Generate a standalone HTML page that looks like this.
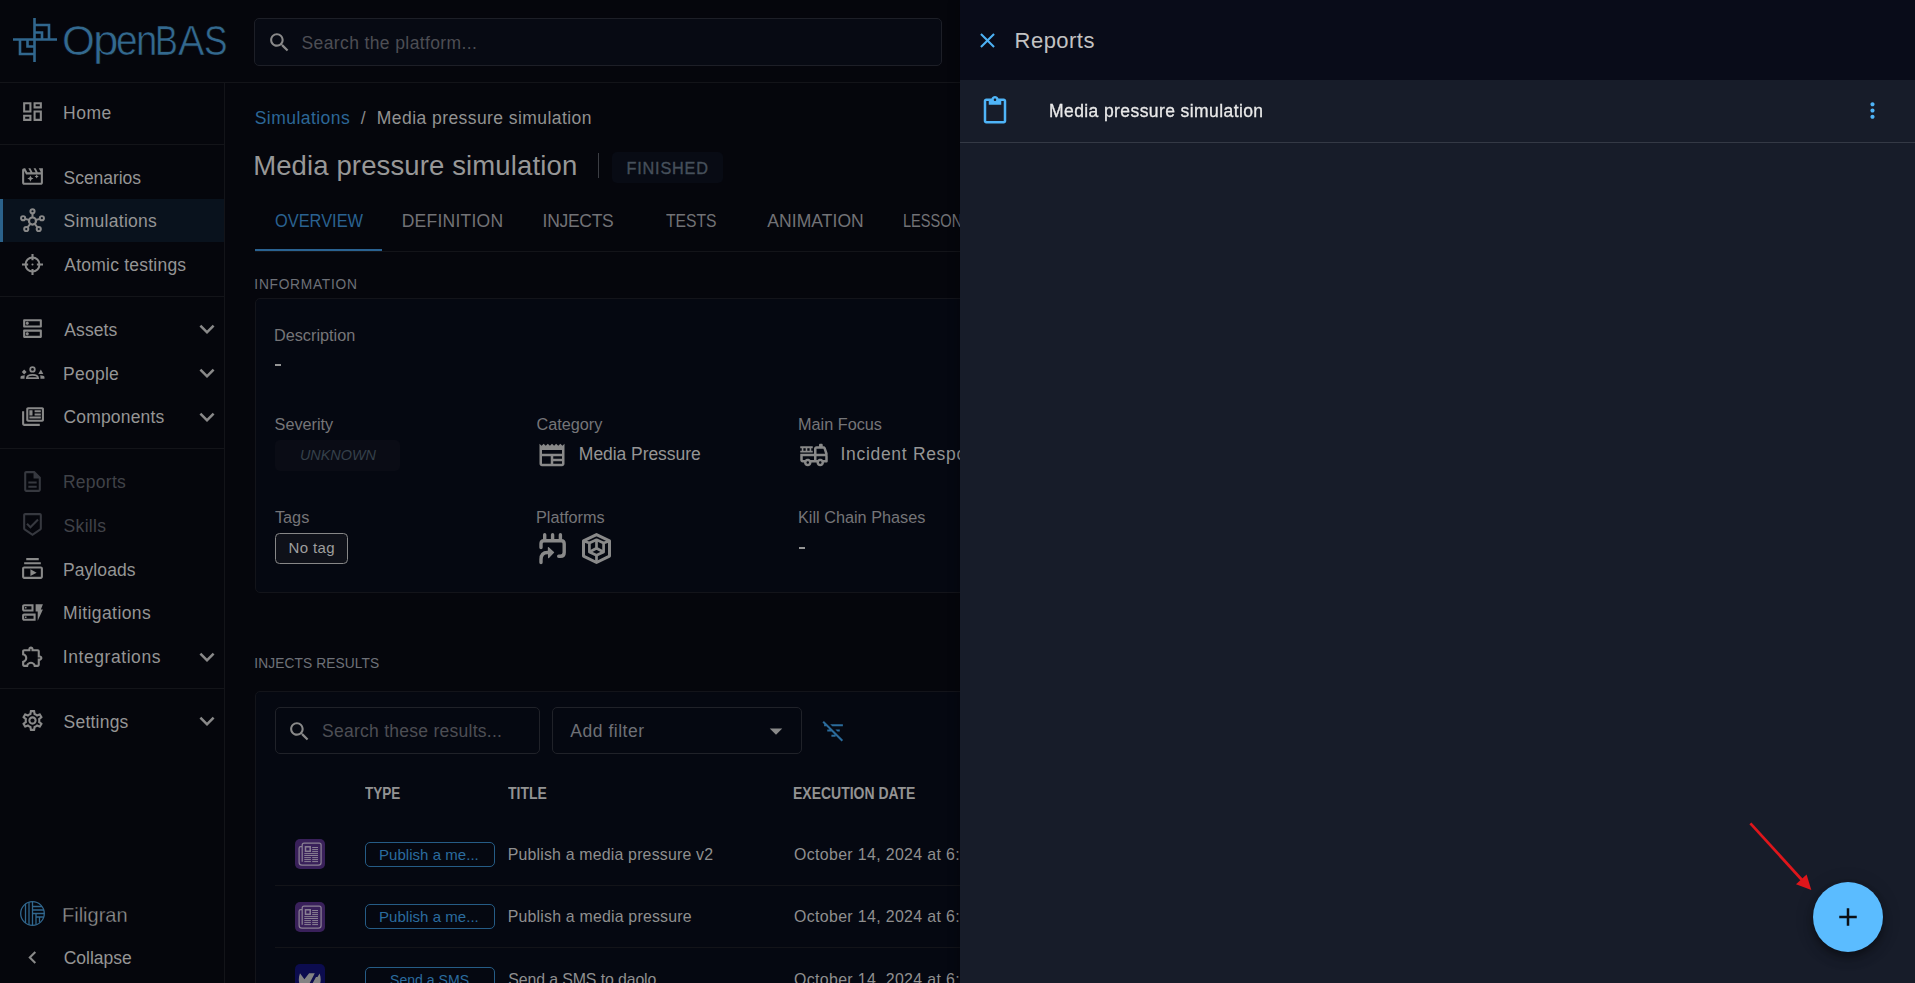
<!DOCTYPE html>
<html lang="en">
<head>
<meta charset="utf-8">
<title>OpenBAS - Reports</title>
<style>
*{box-sizing:border-box;margin:0;padding:0}
html,body{width:1915px;height:983px;overflow:hidden;background:#05060c}
body{font-family:"Liberation Sans",sans-serif;position:relative}
svg{display:block}
.b{position:absolute}
.t{position:absolute;white-space:nowrap}
#side{position:absolute;left:0;top:0;width:225px;height:983px}
#main{position:absolute;left:0;top:0;width:960px;height:983px;overflow:hidden}
#drawer{position:absolute;left:0;top:0;width:1915px;height:983px}
#dsh{position:absolute;left:960px;top:0;width:955px;height:983px;box-shadow:0 0 10px 1px rgba(0,0,0,.35)}
</style>
</head>
<body>
<div id="side">
<svg class="b" style="left:13px;top:18px" width="44" height="44" viewBox="0 0 44 44" fill="none" stroke="#31678e" stroke-width="2.6"><path d="M21.5 0V44"/><path d="M0 21.5H44"/><path d="M21.5 7H36V21.5"/><path d="M21.5 14.500H29V21.500"/><path d="M7 21.500V36H21.500"/><path d="M14.500 21.500V28.500H21.500"/></svg>
<div class="t" style="left:62.20px;top:17px;line-height:47px;font-size:41.6px;color:#33698f;transform:scaleX(1.0142);transform-origin:0 50%;-webkit-text-stroke:0.6px #05060c;">O</div>
<div class="t" style="left:92.65px;top:17px;line-height:47px;font-size:41.6px;color:#33698f;transform:scaleX(1.1011);transform-origin:0 50%;-webkit-text-stroke:0.6px #05060c;">p</div>
<div class="t" style="left:116.45px;top:17px;line-height:47px;font-size:41.6px;color:#33698f;transform:scaleX(0.9324);transform-origin:0 50%;-webkit-text-stroke:0.6px #05060c;">e</div>
<div class="t" style="left:136.25px;top:17px;line-height:47px;font-size:41.6px;color:#33698f;transform:scaleX(0.9224);transform-origin:0 50%;-webkit-text-stroke:0.6px #05060c;">n</div>
<div class="t" style="left:155.39px;top:17px;line-height:47px;font-size:41.6px;color:#33698f;transform:scaleX(0.8220);transform-origin:0 50%;-webkit-text-stroke:0.6px #05060c;">B</div>
<div class="t" style="left:177.52px;top:17px;line-height:47px;font-size:41.6px;color:#33698f;transform:scaleX(0.9534);transform-origin:0 50%;-webkit-text-stroke:0.6px #05060c;">A</div>
<div class="t" style="left:203.60px;top:17px;line-height:47px;font-size:41.6px;color:#33698f;transform:scaleX(0.8477);transform-origin:0 50%;-webkit-text-stroke:0.6px #05060c;">S</div>
<svg class="b" style="left:20px;top:99px;fill:#898989;" width="25" height="25" viewBox="0 0 24 24"><path d="M19 5v2h-4V5h4M9 5v6H5V5h4m10 8v6h-4v-6h4M9 17v2H5v-2h4M21 3h-8v6h8V3zM11 3H3v10h8V3zm10 8h-8v10h8V11zm-10 4H3v6h8v-6z"/></svg>
<div class="t" style="left:62.96px;top:103px;line-height:20px;font-size:17.5px;color:#959595;letter-spacing:0.544px;">Home</div>
<svg class="b" style="left:20px;top:164px;fill:#898989;" width="25" height="25" viewBox="0 0 24 24"><path d="M10 11l-.94 2.06L7 14l2.06.94L10 17l.94-2.06L13 14l-2.06-.94zm8.01-7l2 4h-3l-2-4h-2l2 4h-3l-2-4h-2l2 4h-3l-2-4h-1c-1.1 0-1.99.9-1.99 2l-.01 12c0 1.1.9 2 2 2h16c1.1 0 1.99-.9 1.99-2V4h-3.99zm2 14h-16V6.47L5.77 10H16l-.63 1.37L14 12l1.37.63L16 14l.63-1.37L18 12l-1.37-.63L16 10h4.01v8z"/></svg>
<div class="t" style="left:63.61px;top:168px;line-height:20px;font-size:17.5px;color:#959595;letter-spacing:-0.049px;">Scenarios</div>
<div class="b" style="left:0px;top:199px;width:224px;height:43px;background:#09121d"></div>
<div class="b" style="left:0px;top:199px;width:2.7px;height:43px;background:#2b628b"></div>
<svg class="b" style="left:20px;top:208px;fill:#898989;stroke:#898989;" width="25" height="25" viewBox="0 0 24 24"><g fill="none" stroke-width="1.9"><circle cx="12" cy="12.500" r="3.400" stroke-width="2.100"/><circle cx="12" cy="3.100" r="2"/><circle cx="3" cy="9.800" r="2"/><circle cx="21" cy="9.800" r="2"/><circle cx="6" cy="20.200" r="2"/><circle cx="18" cy="20.200" r="2"/><path d="M12 5.100V9.100M4.900 10.400L8.800 11.500M19.100 10.400L15.200 11.500M7.200 18.600L9.900 15.200M16.800 18.600L14.100 15.200"/></g></svg>
<div class="t" style="left:63.61px;top:211px;line-height:20px;font-size:17.5px;color:#959595;letter-spacing:0.277px;">Simulations</div>
<svg class="b" style="left:20px;top:252px;fill:#898989;stroke:#898989;" width="25" height="25" viewBox="0 0 24 24"><g fill="none"><circle cx="12" cy="12" r="6.700" stroke-width="1.900"/><path stroke-width="2" d="M12 1.900V7.800M12 16.200V22.100M1.900 12H7.800M16.200 12H22.100"/></g><circle cx="12" cy="12" r="1" stroke="none"/></svg>
<div class="t" style="left:64.37px;top:255px;line-height:20px;font-size:17.5px;color:#959595;letter-spacing:0.222px;">Atomic testings</div>
<svg class="b" style="left:20px;top:316px;fill:#898989;" width="25" height="25" viewBox="0 0 24 24"><path d="M19 15v4H5v-4h14m1-2H4c-.55 0-1 .45-1 1v6c0 .55.45 1 1 1h16c.55 0 1-.45 1-1v-6c0-.55-.45-1-1-1zM7 18.5c-.82 0-1.5-.67-1.5-1.5s.68-1.5 1.5-1.5 1.5.67 1.5 1.5-.67 1.5-1.5 1.5zM19 5v4H5V5h14m1-2H4c-.55 0-1 .45-1 1v6c0 .55.45 1 1 1h16c.55 0 1-.45 1-1V4c0-.55-.45-1-1-1zM7 8.5c-.82 0-1.5-.67-1.5-1.5S6.18 5.5 7 5.5s1.5.68 1.5 1.5S7.83 8.5 7 8.5z"/></svg>
<div class="t" style="left:64.37px;top:320px;line-height:20px;font-size:17.5px;color:#959595;letter-spacing:0.090px;">Assets</div>
<svg class="b" style="left:192px;top:313.5px;fill:#898989;" width="30" height="30" viewBox="0 0 24 24"><path d="M16.59 8.59L12 13.17 7.41 8.59 6 10l6 6 6-6z"/></svg>
<svg class="b" style="left:20px;top:360px;fill:#898989;stroke:#898989;" width="25" height="25" viewBox="0 0 24 24"><g transform="translate(0,1)"><circle cx="12" cy="8" r="2.200" fill="none" stroke-width="1.700"/><path d="M6.600 16.300C7 12.200 17 12.200 17.400 16.300Z" fill="none" stroke-width="1.700"/><path d="M4 8.200L6.300 10.500 4 12.800 1.700 10.500Z" stroke="none"/><path d="M20 8.200L22.400 12.500H17.600Z" stroke="none"/><path d="M0.500 17.100V15.200C0.500 14.300 2.400 13.600 4.600 13.600C4.400 14.600 4.300 15.800 4.400 17.100Z" stroke="none"/><path d="M23.500 17.100V15.200C23.500 14.300 21.600 13.600 19.400 13.600C19.600 14.600 19.700 15.800 19.600 17.100Z" stroke="none"/></g></svg>
<div class="t" style="left:62.96px;top:364px;line-height:20px;font-size:17.5px;color:#959595;letter-spacing:0.264px;">People</div>
<svg class="b" style="left:192px;top:357.5px;fill:#898989;" width="30" height="30" viewBox="0 0 24 24"><path d="M16.59 8.59L12 13.17 7.41 8.59 6 10l6 6 6-6z"/></svg>
<svg class="b" style="left:20px;top:404px;fill:#898989;" width="25" height="25" viewBox="0 0 24 24"><path d="M4 7v12h15v2H4c-2 0-2-2-2-2V7h2m17-2v10H8V5h13m.3-2H7.7C6.76 3 6 3.7 6 4.55v10.9c0 .86.76 1.55 1.7 1.55h13.6c.94 0 1.7-.69 1.7-1.55V4.55C23 3.7 22.24 3 21.3 3M9 6h3v5H9V6m11 8H9v-2h11v2m0-6h-6V6h6v2m0 3h-6V9h6v2z"/></svg>
<div class="t" style="left:63.51px;top:407px;line-height:20px;font-size:17.5px;color:#959595;letter-spacing:0.166px;">Components</div>
<svg class="b" style="left:192px;top:401.5px;fill:#898989;" width="30" height="30" viewBox="0 0 24 24"><path d="M16.59 8.59L12 13.17 7.41 8.59 6 10l6 6 6-6z"/></svg>
<svg class="b" style="left:20px;top:469px;fill:#36383f;" width="25" height="25" viewBox="0 0 24 24"><path d="M8 16h8v2H8zm0-4h8v2H8zm6-10H6c-1.1 0-2 .9-2 2v16c0 1.1.89 2 1.99 2H18c1.1 0 2-.9 2-2V8l-6-6zm4 18H6V4h7v5h5v11z"/></svg>
<div class="t" style="left:62.96px;top:472px;line-height:20px;font-size:17.5px;color:#404248;letter-spacing:0.265px;">Reports</div>
<svg class="b" style="left:20px;top:512px;fill:#36383f;" width="25" height="25" viewBox="0 0 24 24"><path d="M19 1H5c-1.1 0-1.99.9-1.99 2L3 15.93c0 .69.35 1.3.88 1.66L12 23l8.11-5.41c.53-.36.88-.97.88-1.66L21 3c0-1.1-.9-2-2-2zm-7 19.6l-7-4.66V3h14v12.93l-7 4.67zm-2.01-7.42l-2.58-2.59L6 12l4 4 8-8-1.42-1.42z"/></svg>
<div class="t" style="left:63.61px;top:516px;line-height:20px;font-size:17.5px;color:#404248;letter-spacing:0.318px;">Skills</div>
<svg class="b" style="left:20px;top:556px;fill:#898989;" width="25" height="25" viewBox="0 0 24 24"><path d="M4 6h16v2H4zm2-4h12v2H6zm14 8H4c-1.1 0-2 .9-2 2v8c0 1.1.9 2 2 2h16c1.1 0 2-.9 2-2v-8c0-1.1-.9-2-2-2zm0 10H4v-8h16v8zm-10-7.27v6.53L16 16z"/></svg>
<div class="t" style="left:62.96px;top:560px;line-height:20px;font-size:17.5px;color:#959595;letter-spacing:0.082px;">Payloads</div>
<svg class="b" style="left:20px;top:600px;fill:#898989;" width="25" height="25" viewBox="0 0 24 24"><path d="M17 20v-9h-2V4h7l-2 5h2l-5 11zM15 13v7H4c-1.1 0-2-.9-2-2v-3c0-1.1.9-2 2-2h11zm-2 2H4v3h9v-3zm-6.75.75h-1.5v1.5h1.5zM13 4v7H4c-1.1 0-2-.9-2-2V6c0-1.1.9-2 2-2h9zm-2 2H4v3h7V6zM6.25 6.75h-1.5v1.5h1.5v-1.5z"/></svg>
<div class="t" style="left:62.96px;top:603px;line-height:20px;font-size:17.5px;color:#959595;letter-spacing:0.412px;">Mitigations</div>
<svg class="b" style="left:20px;top:644px;fill:#898989;" width="25" height="25" viewBox="0 0 24 24"><path d="M10.5 4.5c.28 0 .5.22.5.5v2h6v6h2c.28 0 .5.22.5.5s-.22.5-.5.5h-2v6h-2.12c-.68-1.75-2.39-3-4.38-3s-3.7 1.25-4.38 3H4v-2.12c1.75-.68 3-2.39 3-4.38 0-1.99-1.24-3.7-2.99-4.38L4 7h6V5c0-.28.22-.5.5-.5m0-2C9.12 2.5 8 3.62 8 5H4c-1.1 0-1.99.9-1.99 2v3.8h.29c1.49 0 2.7 1.21 2.7 2.7s-1.21 2.7-2.7 2.7H2V20c0 1.1.9 2 2 2h3.8v-.3c0-1.49 1.21-2.7 2.7-2.7s2.7 1.21 2.7 2.7v.3H17c1.1 0 2-.9 2-2v-4c1.38 0 2.5-1.12 2.5-2.5S20.38 11 19 11V7c0-1.1-.9-2-2-2h-4c0-1.38-1.12-2.5-2.5-2.5z"/></svg>
<div class="t" style="left:62.79px;top:647px;line-height:20px;font-size:17.5px;color:#959595;letter-spacing:0.564px;">Integrations</div>
<svg class="b" style="left:192px;top:641.5px;fill:#898989;" width="30" height="30" viewBox="0 0 24 24"><path d="M16.59 8.59L12 13.17 7.41 8.59 6 10l6 6 6-6z"/></svg>
<svg class="b" style="left:20px;top:708px;fill:#898989;" width="25" height="25" viewBox="0 0 24 24"><path d="M19.43 12.98c.04-.32.07-.64.07-.98 0-.34-.03-.66-.07-.98l2.11-1.65c.19-.15.24-.42.12-.64l-2-3.46c-.09-.16-.26-.25-.44-.25-.06 0-.12.01-.17.03l-2.49 1c-.52-.4-1.08-.73-1.69-.98l-.38-2.65C14.46 2.18 14.25 2 14 2h-4c-.25 0-.46.18-.49.42l-.38 2.65c-.61.25-1.17.59-1.69.98l-2.49-1c-.06-.02-.12-.03-.18-.03-.17 0-.34.09-.43.25l-2 3.46c-.13.22-.07.49.12.64l2.11 1.65c-.04.32-.07.65-.07.98 0 .33.03.66.07.98l-2.11 1.65c-.19.15-.24.42-.12.64l2 3.46c.09.16.26.25.44.25.06 0 .12-.01.17-.03l2.49-1c.52.4 1.08.73 1.69.98l.38 2.65c.03.24.24.42.49.42h4c.25 0 .46-.18.49-.42l.38-2.65c.61-.25 1.17-.59 1.69-.98l2.49 1c.06.02.12.03.18.03.17 0 .34-.09.43-.25l2-3.46c.12-.22.07-.49-.12-.64l-2.11-1.65zm-1.98-1.71c.04.31.05.52.05.73 0 .21-.02.43-.05.73l-.14 1.13.89.7 1.08.84-.7 1.21-1.27-.51-1.04-.42-.9.68c-.43.32-.84.56-1.25.73l-1.06.43-.16 1.13-.2 1.35h-1.4l-.19-1.35-.16-1.13-1.06-.43c-.43-.18-.83-.41-1.23-.71l-.91-.7-1.06.43-1.27.51-.7-1.21 1.08-.84.89-.7-.14-1.13c-.03-.31-.05-.54-.05-.74s.02-.43.05-.73l.14-1.13-.89-.7-1.08-.84.7-1.21 1.27.51 1.04.42.9-.68c.43-.32.84-.56 1.25-.73l1.06-.43.16-1.13.2-1.35h1.39l.19 1.35.16 1.13 1.06.43c.43.18.83.41 1.23.71l.91.7 1.06-.43 1.27-.51.7 1.21-1.07.85-.89.7.14 1.13zM12 8c-2.21 0-4 1.79-4 4s1.79 4 4 4 4-1.79 4-4-1.79-4-4-4zm0 6c-1.1 0-2-.9-2-2s.9-2 2-2 2 .9 2 2-.9 2-2 2z"/></svg>
<div class="t" style="left:63.61px;top:712px;line-height:20px;font-size:17.5px;color:#959595;letter-spacing:0.213px;">Settings</div>
<svg class="b" style="left:192px;top:705.5px;fill:#898989;" width="30" height="30" viewBox="0 0 24 24"><path d="M16.59 8.59L12 13.17 7.41 8.59 6 10l6 6 6-6z"/></svg>
<div class="b" style="left:0px;top:144px;width:224px;height:1px;background:#131419"></div>
<div class="b" style="left:0px;top:296px;width:224px;height:1px;background:#131419"></div>
<div class="b" style="left:0px;top:448px;width:224px;height:1px;background:#131419"></div>
<div class="b" style="left:0px;top:688px;width:224px;height:1px;background:#131419"></div>
<div class="b" style="left:224px;top:82px;width:1px;height:901px;background:#131419"></div>
<svg class="b" style="left:20px;top:901px" width="25" height="25" viewBox="0 0 25 25" fill="none" stroke="#31678e" stroke-width="1.300"><circle cx="12.500" cy="12.500" r="11.800"/><path d="M5.500 3V22M9 1.300V23.700M12.500 0.700V24.300M12.500 5.500H22M12.500 9H24M12.500 12.500H24.300M16 12.500V23.500M16 16H23.700M19.500 16V21.500"/></svg>
<div class="t" id="fil" style="left:61.96px;top:903px;line-height:23px;font-size:21px;color:#8f8f8f;transform:scaleX(0.9533);transform-origin:0 50%;-webkit-text-stroke:0.3px #05060c;">Filigran</div>
<svg class="b" style="left:20px;top:945px;fill:#898989;" width="25" height="25" viewBox="0 0 24 24"><path d="M15.41 7.41L14 6l-6 6 6 6 1.41-1.41L10.83 12z"/></svg>
<div class="t" style="left:63.71px;top:948px;line-height:20px;font-size:17.5px;color:#959595;letter-spacing:-0.018px;">Collapse</div>
</div>
<div class="b" style="left:0px;top:82px;width:960px;height:1px;background:#131419"></div>
<div id="main">
<div class="b" style="left:254px;top:18px;width:688px;height:48px;border:1px solid #1d1f27;border-radius:5px;background:#070a13"></div>
<svg class="b" style="left:267px;top:30px;fill:#898989;" width="25" height="25" viewBox="0 0 24 24"><path d="M15.5 14h-.79l-.28-.27C15.41 12.59 16 11.11 16 9.5 16 5.91 13.09 3 9.5 3S3 5.91 3 9.5 5.91 16 9.5 16c1.61 0 3.09-.59 4.23-1.57l.27.28v.79l5 4.99L20.49 19l-4.99-5zm-6 0C7.01 14 5 11.99 5 9.5S7.01 5 9.5 5 14 7.01 14 9.5 11.99 14 9.5 14z"/></svg>
<div class="t" style="left:301.51px;top:33px;line-height:20px;font-size:17.5px;color:#4d4e54;letter-spacing:0.385px;">Search the platform...</div>
<div class="t" style="left:254.71px;top:108px;line-height:20px;font-size:17.5px;color:#2c6797;letter-spacing:0.457px;">Simulations</div>
<div class="t" style="left:360.80px;top:108px;line-height:20px;font-size:17.5px;color:#8a8a8a;">/</div>
<div class="t" style="left:376.86px;top:108px;line-height:20px;font-size:17.5px;color:#929292;letter-spacing:0.430px;">Media pressure simulation</div>
<div class="t" id="h1" style="left:253.14px;top:150px;line-height:31px;font-size:27.5px;color:#979797;letter-spacing:0.128px;">Media pressure simulation</div>
<div class="b" style="left:598px;top:153px;width:1px;height:25px;background:#3c3e44"></div>
<div class="b" style="left:612px;top:152px;width:111px;height:31px;border-radius:5px;background:#080b14"></div>
<div class="t" style="left:626.47px;top:159px;line-height:18px;font-size:16.25px;color:#46505b;letter-spacing:0.810px;-webkit-text-stroke:0.35px #46505b;">FINISHED</div>
<div class="b" style="left:255px;top:251px;width:705px;height:1px;background:#131419"></div>
<div class="b" style="left:255px;top:248.5px;width:127px;height:2.5px;background:#2a6291"></div>
<div class="t" style="left:274.52px;top:211px;line-height:20px;font-size:17.5px;color:#2a6291;transform:scaleX(0.9365);transform-origin:0 50%;">OVERVIEW</div>
<div class="t" style="left:401.66px;top:211px;line-height:20px;font-size:17.5px;color:#727276;letter-spacing:0.255px;">DEFINITION</div>
<div class="t" style="left:542.59px;top:211px;line-height:20px;font-size:17.5px;color:#727276;letter-spacing:-0.284px;">INJECTS</div>
<div class="t" style="left:665.95px;top:211px;line-height:20px;font-size:17.5px;color:#727276;transform:scaleX(0.8967);transform-origin:0 50%;">TESTS</div>
<div class="t" style="left:767.27px;top:211px;line-height:20px;font-size:17.5px;color:#727276;letter-spacing:0.067px;">ANIMATION</div>
<div class="t" style="left:902.80px;top:211px;line-height:20px;font-size:17.5px;color:#727276;transform:scaleX(0.8337);transform-origin:0 50%;">LESSONS LEARNED</div>
<div class="t" style="left:254.33px;top:277px;line-height:15px;font-size:13.75px;color:#6e7178;letter-spacing:0.737px;">INFORMATION</div>
<div class="b" style="left:255px;top:298px;width:760px;height:295px;border:1px solid #13141a;border-radius:5px;background:#050811"></div>
<div class="t" style="left:273.97px;top:326px;line-height:18px;font-size:16.25px;color:#757578;">Description</div>
<div class="b" style="left:275px;top:364px;width:6px;height:2px;background:#959595"></div>
<div class="t" style="left:274.56px;top:415px;line-height:18px;font-size:16.25px;color:#757578;">Severity</div>
<div class="b" style="left:275px;top:440px;width:124.7px;height:30.5px;border-radius:5px;background:#0a0c15"></div>
<div class="t" style="left:299.92px;top:447px;line-height:16px;font-size:14.4px;color:#35404a;letter-spacing:0.012px;font-style:italic;">UNKNOWN</div>
<div class="t" style="left:536.47px;top:415px;line-height:18px;font-size:16.25px;color:#757578;">Category</div>
<svg class="b" style="left:537px;top:440px;fill:#898989;" width="30" height="30" viewBox="0 0 24 24"><path d="M22 3l-1.67 1.67L18.67 3 17 4.67 15.33 3l-1.66 1.67L12 3l-1.67 1.67L8.67 3 7 4.67 5.33 3 3.67 4.67 2 3v16c0 1.1.9 2 2 2h16c1.1 0 2-.9 2-2V3zM11 19H4v-6h7v6zm9 0h-7v-2h7v2zm0-4h-7v-2h7v2zm0-4H4V8h16v3z"/></svg>
<div class="t" style="left:578.86px;top:444px;line-height:20px;font-size:17.5px;color:#959595;letter-spacing:-0.057px;">Media Pressure</div>
<div class="t" style="left:797.97px;top:415px;line-height:18px;font-size:16.25px;color:#757578;">Main Focus</div>
<svg class="b" style="left:798.5px;top:440px;fill:#898989;" width="30" height="30" viewBox="0 0 24 24"><path d="M22.9 10.69l-1.44-4.32C21.18 5.55 20.42 5 19.56 5H19V4c0-.55-.45-1-1-1h-1c-.55 0-1 .45-1 1v1h-2c-1.1 0-2 .9-2 2v4H1v5c0 1.1.9 2 2 2h1c0 1.66 1.34 3 3 3s3-1.34 3-3h4c0 1.66 1.34 3 3 3s3-1.34 3-3h2c.55 0 1-.45 1-1v-3.68c0-.21-.03-.42-.1-.63zM14 7h5.560l1.330 4H14V7zM7 19c-.55 0-1-.45-1-1s.45-1 1-1 1 .45 1 1-.45 1-1 1zm5-3H9.220c-.55-.61-1.330-1-2.220-1s-1.670.39-2.220 1H3v-3h9v3zm5 3c-.55 0-1-.45-1-1s.45-1 1-1 1 .45 1 1-.45 1-1 1zm2.220-3c-.55-.61-1.340-1-2.220-1s-1.670.39-2.220 1H14v-3h7v3h-1.780z M1 5h10v1.500H1z M1 8.500h10V10H1z M2.200 6.500h1.300v2h-1.300z M5.350 6.500h1.300v2h-1.300z M8.500 6.500h1.300v2h-1.300z"/></svg>
<div class="t" style="left:840.59px;top:444px;line-height:20px;font-size:17.5px;color:#959595;letter-spacing:0.683px;">Incident Response</div>
<div class="t" style="left:274.94px;top:508px;line-height:18px;font-size:16.25px;color:#757578;">Tags</div>
<div class="b" style="left:275px;top:533px;width:73px;height:31px;border:1px solid #878787;border-radius:4.500px;background:#0f1119"></div>
<div class="t" style="left:288.57px;top:539px;line-height:17px;font-size:15px;color:#9e9e9e;letter-spacing:0.361px;">No tag</div>
<div class="t" style="left:535.97px;top:508px;line-height:18px;font-size:16.25px;color:#757578;">Platforms</div>
<svg class="b" style="left:535px;top:530px" width="35" height="37" viewBox="0 0 35 37" fill="none" stroke="#898989" stroke-width="3.400" stroke-linecap="round" stroke-linejoin="round"><path d="M9.700 4.800V9.500M17.600 4.800V9.500M25.400 4.800V9.500"/><path d="M6 17.500V13.700Q6 10.700 9 10.700H26.200Q29.200 10.700 29.200 13.700V22.500Q29.200 26.300 25.400 26.300H23.700"/><path d="M6 32.500V29.500Q6 22.500 12.500 22.500H14"/><path d="M13.400 17.600L18.600 22.400L13.600 27.600Z" fill="#898989" stroke-width="1.200"/></svg>
<svg class="b" style="left:576px;top:528px" width="40" height="40" viewBox="0 0 40 40" fill="none" stroke="#898989" stroke-linejoin="round"><path stroke-width="3" d="M20.500 6.600L33.500 12.900V28.100L20.500 34.500L7.500 28.100V12.900Z"/><path stroke-width="2.700" d="M20.500 11.800L27.600 15V24L20.500 27.300L13.400 24V15Z"/><path stroke-width="2.700" d="M20.500 11.800V20.300M20.500 20.300L13.400 24M20.500 20.300L27.600 24M20.500 27.300V34M7.500 12.900L13.400 15M33.500 12.900L27.600 15"/></svg>
<div class="t" style="left:797.97px;top:508px;line-height:18px;font-size:16.25px;color:#757578;">Kill Chain Phases</div>
<div class="b" style="left:799px;top:547px;width:6px;height:2px;background:#959595"></div>
<div class="t" style="left:254.33px;top:656px;line-height:15px;font-size:13.75px;color:#6e7178;letter-spacing:0.099px;">INJECTS RESULTS</div>
<div class="b" style="left:255px;top:691px;width:760px;height:320px;border:1px solid #13141a;border-radius:5px;background:#050811"></div>
<div class="b" style="left:275px;top:707px;width:265px;height:47px;border:1px solid #202229;border-radius:5px"></div>
<svg class="b" style="left:287px;top:718.5px;fill:#898989;" width="25" height="25" viewBox="0 0 24 24"><path d="M15.5 14h-.79l-.28-.27C15.41 12.59 16 11.11 16 9.5 16 5.91 13.09 3 9.5 3S3 5.91 3 9.5 5.91 16 9.5 16c1.61 0 3.09-.59 4.23-1.57l.27.28v.79l5 4.99L20.49 19l-4.99-5zm-6 0C7.01 14 5 11.99 5 9.5S7.01 5 9.5 5 14 7.01 14 9.5 11.99 14 9.5 14z"/></svg>
<div class="t" style="left:322.01px;top:721px;line-height:20px;font-size:17.5px;color:#4d4e54;letter-spacing:0.263px;">Search these results...</div>
<div class="b" style="left:552px;top:707px;width:250px;height:47px;border:1px solid #202229;border-radius:5px"></div>
<div class="t" style="left:570.27px;top:721px;line-height:20px;font-size:17.5px;color:#6e7076;letter-spacing:0.529px;">Add filter</div>
<svg class="b" style="left:761px;top:716px;fill:#898989;" width="30" height="30" viewBox="0 0 24 24"><path d="M7 10l5 5 5-5z"/></svg>
<svg class="b" style="left:821px;top:718px;fill:#2b6b9b;" width="25" height="25" viewBox="0 0 24 24"><path d="M10.83 8H21V6H8.83l2 2zm5 5H18v-2h-4.17l2 2zM14 16.83V18h-4v-2h3.17l-3-3H6v-2h2.17l-3-3H3V6h.17L1.39 4.22 2.8 2.81l18.38 18.38-1.41 1.41L14 16.83z"/></svg>
<div class="t" style="left:365.15px;top:785px;line-height:17px;font-size:15.6px;color:#939393;transform:scaleX(0.8659);transform-origin:0 50%;font-weight:bold;">TYPE</div>
<div class="t" style="left:508.14px;top:785px;line-height:17px;font-size:15.6px;color:#939393;transform:scaleX(0.8979);transform-origin:0 50%;font-weight:bold;">TITLE</div>
<div class="t" style="left:793.36px;top:785px;line-height:17px;font-size:15.6px;color:#939393;transform:scaleX(0.8963);transform-origin:0 50%;font-weight:bold;">EXECUTION DATE</div>
<div class="b" style="left:275px;top:885px;width:700px;height:1px;background:#131419"></div>
<div class="b" style="left:275px;top:947px;width:700px;height:1px;background:#131419"></div>
<div class="b" style="left:295px;top:839px;width:30px;height:30px;border-radius:5px;background:#39205a"></div>
<svg class="b" style="left:295px;top:839px;" width="30" height="30" viewBox="0 0 30 30"><g fill="none" stroke="#8a8094" stroke-width="1.250"><path d="M7.200 7.700H5.700Q4.100 7.700 4.100 9.300V23.300Q4.100 26.200 7 26.200H23.400Q26.100 26.200 26.100 23.500V6Q26.100 4.100 24.200 4.100H9.100Q7.200 4.100 7.200 6V22.800"/><rect x="10.500" y="7.800" width="4.700" height="4.500" stroke-width="1.500"/><path stroke-width="1" d="M17.200 8.500H23M17.200 10.600H23M17.200 12.600H23M9.300 14.600H23M9.300 16.500H23M9.300 18.600H15.900M17.200 18.600H23M9.300 20.600H15.900M17.200 20.600H23M9.300 22.600H15.900M17.200 22.600H23"/></g></svg>
<div class="b" style="left:365px;top:842px;width:130px;height:25px;border:1px solid #255c86;border-radius:5px"></div>
<div class="t" style="left:378.97px;top:846px;line-height:17px;font-size:15px;color:#2b6c9f;letter-spacing:0.042px;">Publish a me...</div>
<div class="t" style="left:507.70px;top:846px;line-height:17px;font-size:15.9px;color:#8f8f8f;letter-spacing:0.184px;">Publish a media pressure v2</div>
<div class="t" style="left:793.95px;top:846px;line-height:17px;font-size:15.9px;color:#8f8f8f;letter-spacing:0.361px;">October 14, 2024 at 6:48 PM</div>
<div class="b" style="left:295px;top:902px;width:30px;height:30px;border-radius:5px;background:#39205a"></div>
<svg class="b" style="left:295px;top:902px;" width="30" height="30" viewBox="0 0 30 30"><g fill="none" stroke="#8a8094" stroke-width="1.250"><path d="M7.200 7.700H5.700Q4.100 7.700 4.100 9.300V23.300Q4.100 26.200 7 26.200H23.400Q26.100 26.200 26.100 23.500V6Q26.100 4.100 24.200 4.100H9.100Q7.200 4.100 7.200 6V22.800"/><rect x="10.500" y="7.800" width="4.700" height="4.500" stroke-width="1.500"/><path stroke-width="1" d="M17.200 8.500H23M17.200 10.600H23M17.200 12.600H23M9.300 14.600H23M9.300 16.500H23M9.300 18.600H15.900M17.200 18.600H23M9.300 20.600H15.900M17.200 20.600H23M9.300 22.600H15.900M17.200 22.600H23"/></g></svg>
<div class="b" style="left:365px;top:904px;width:130px;height:25px;border:1px solid #255c86;border-radius:5px"></div>
<div class="t" style="left:378.97px;top:908px;line-height:17px;font-size:15px;color:#2b6c9f;letter-spacing:0.042px;">Publish a me...</div>
<div class="t" style="left:507.70px;top:908px;line-height:17px;font-size:15.9px;color:#8f8f8f;letter-spacing:0.200px;">Publish a media pressure</div>
<div class="t" style="left:793.95px;top:908px;line-height:17px;font-size:15.9px;color:#8f8f8f;letter-spacing:0.361px;">October 14, 2024 at 6:48 PM</div>
<div class="b" style="left:295px;top:964px;width:30px;height:30px;border-radius:5px;background:#0c0c4e"></div>
<svg class="b" style="left:295px;top:964px;" width="30" height="30" viewBox="0 0 30 30"><g fill="#838383"><path d="M5 9.200L9.400 15.300L14.100 9.200H19.800L14.200 20H4.500C3.500 17 3.500 13 5 9.200Z"/><path d="M24.600 9.400C26 13 26 17 25 20H17.200L21 13H22.500Z"/></g></svg>
<div class="b" style="left:365px;top:967px;width:130px;height:25px;border:1px solid #255c86;border-radius:5px"></div>
<div class="t" style="left:390.36px;top:971px;line-height:17px;font-size:15px;color:#2b6c9f;transform:scaleX(0.9391);transform-origin:0 50%;">Send a SMS</div>
<div class="t" style="left:508.28px;top:971px;line-height:17px;font-size:15.9px;color:#8f8f8f;letter-spacing:-0.115px;">Send a SMS to daolo</div>
<div class="t" style="left:793.95px;top:971px;line-height:17px;font-size:15.9px;color:#8f8f8f;letter-spacing:0.361px;">October 14, 2024 at 6:48 PM</div>
</div>
<div id="drawer">
<div id="dsh"></div>
<div class="b" style="left:960px;top:0px;width:955px;height:983px;background:#171c29"></div>
<div class="b" style="left:960px;top:0px;width:955px;height:80px;background:#090c19"></div>
<svg class="b" style="left:975px;top:28px;fill:#4db1f3;" width="25" height="25" viewBox="0 0 24 24"><path d="M19 6.41L17.59 5 12 10.59 6.41 5 5 6.41 10.59 12 5 17.59 6.41 19 12 13.41 17.59 19 19 17.59 13.41 12z"/></svg>
<div class="t" style="left:1014.60px;top:28px;line-height:25px;font-size:22px;color:#c2c2c2;letter-spacing:0.461px;">Reports</div>
<div class="b" style="left:960px;top:142px;width:955px;height:1.3px;background:#343945"></div>
<svg class="b" style="left:980px;top:96px;fill:#4fb4f7;" width="30" height="30" viewBox="0 0 24 24"><path d="M19 2h-4.18C14.4.84 13.3 0 12 0S9.6.84 9.18 2H5c-1.1 0-2 .9-2 2v16c0 1.1.9 2 2 2h14c1.1 0 2-.9 2-2V4c0-1.1-.9-2-2-2zm-7 0c.55 0 1 .45 1 1s-.45 1-1 1-1-.45-1-1 .45-1 1-1zm7 18H5V4h2v3h10V4h2v16z"/></svg>
<div class="t" style="left:1049.36px;top:101px;line-height:20px;font-size:17.5px;color:#e9e9e9;letter-spacing:0.409px;will-change:transform;-webkit-text-stroke:0.3px #e9e9e9;">Media pressure simulation</div>
<svg class="b" style="left:1860px;top:98px;fill:#4fb4f7;" width="25" height="25" viewBox="0 0 24 24"><path d="M12 8c1.1 0 2-.9 2-2s-.9-2-2-2-2 .9-2 2 .9 2 2 2zm0 2c-1.1 0-2 .9-2 2s.9 2 2 2 2-.9 2-2-.9-2-2-2zm0 6c-1.1 0-2 .9-2 2s.9 2 2 2 2-.9 2-2-.9-2-2-2z"/></svg>
<div class="b" style="left:1813px;top:882px;width:70px;height:70px;border-radius:50%;background:#5bbcff;box-shadow:0 4px 6px rgba(0,0,0,.25),0 7px 12px rgba(0,0,0,.16),0 2px 20px rgba(0,0,0,.13)"></div>
<svg class="b" style="left:1833px;top:901.5px;fill:#0b0f14;" width="30" height="30" viewBox="0 0 24 24"><path d="M19 13h-6v6h-2v-6H5v-2h6V5h2v6h6v2z"/></svg>
<svg class="b" style="left:1740px;top:815px" width="90" height="90" viewBox="0 0 90 90"><path d="M10.400 8.300L62 65" stroke="#df161b" stroke-width="2.700" fill="none"/><path d="M71.300 74.900L56 69.200L66.600 59.500Z" fill="#df161b"/></svg>
</div>
</body>
</html>
